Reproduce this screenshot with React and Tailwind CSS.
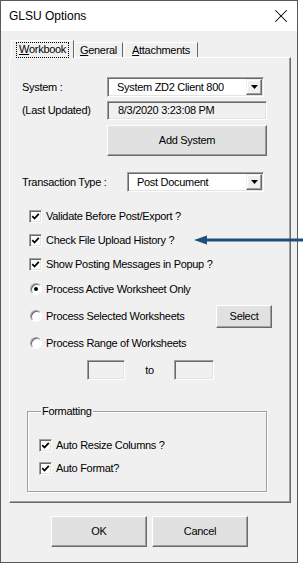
import { X } from 'lucide-react'

const raised = 'border border-t-white border-l-white border-r-[#696969] border-b-[#696969] shadow-[inset_-1px_-1px_0_#a0a0a0,inset_1px_1px_0_#e3e3e3] bg-[#e1e1e1]'
const sunken = 'border border-t-[#a0a0a0] border-l-[#a0a0a0] border-r-white border-b-white shadow-[inset_1px_1px_0_#696969,inset_-1px_-1px_0_#e3e3e3]'

function Combo({ value, width }) {
  return (
    <div className={`h-[20px] ${width} bg-white ${sunken} flex items-center justify-between pl-[9px] pr-[1px]`}>
      <span>{value}</span>
      <div className="w-[16px] h-[16px] bg-[#f0f0f0] border border-t-[#f0f0f0] border-l-[#f0f0f0] border-r-[#696969] border-b-[#696969] shadow-[inset_-1px_-1px_0_#a0a0a0,inset_1px_1px_0_#fff] flex items-center justify-center">
        <svg width="7" height="4" viewBox="0 0 7 4"><path d="M0 0h7L3.5 4z" fill="#000" /></svg>
      </div>
    </div>
  )
}

function Check({ label }) {
  return (
    <div className="flex items-center gap-[4px]">
      <div className={`w-[13px] h-[13px] bg-white ${sunken} flex items-center justify-center`}>
        <svg width="9" height="9" viewBox="0 0 9 9"><path d="M1.3 4.2l2.2 2.3L7.8 1.8" stroke="#000" strokeWidth="1.8" fill="none" /></svg>
      </div>
      <span>{label}</span>
    </div>
  )
}

function Radio({ label, on }) {
  return (
    <div className="flex items-center gap-[4px]">
      <div className="w-[12px] h-[12px] rounded-full bg-white border border-t-[#a0a0a0] border-l-[#a0a0a0] border-r-white border-b-white shadow-[inset_1px_1px_0_#696969] flex items-center justify-center">
        {on && <div className="w-[4px] h-[4px] rounded-full bg-black" />}
      </div>
      <span>{label}</span>
    </div>
  )
}

export default function App() {
  return (
    <div className="relative w-[303px] h-[564px] bg-white text-[11px] text-black leading-[13px] tracking-[-0.3px]" style={{ fontFamily: '"Liberation Sans", Arial, sans-serif' }}>
      <div className="w-[298px] h-[563px] border border-[#5a5a5a] bg-[#f0f0f0] flex flex-col">
        <div className="h-[30px] bg-white flex items-center justify-between pl-[8px] pr-[5px] text-[12px] tracking-normal">
          <span>GLSU Options</span>
          <X size={22} strokeWidth={1.1} color="#000" />
        </div>

        <div className="flex items-end h-[26px] pl-[10px]">
          <div className="relative z-10 h-[18px] -mb-[1px] w-[63px] bg-[#f0f0f0] border-t border-l border-white border-r border-r-[#696969] flex items-center justify-center">
            <span className="px-[3px] outline outline-1 outline-dotted outline-black -outline-offset-1 h-[16px] flex items-center"><u>W</u>orkbook</span>
          </div>
          <div className="h-[15px] w-[49px] border-t border-l border-white border-r border-r-[#696969] flex items-center justify-center pt-[1px]">
            <span><u>G</u>eneral</span>
          </div>
          <div className="h-[15px] w-[74px] ml-[1px] border-t border-l border-white border-r border-r-[#696969] flex items-center justify-center pt-[1px]">
            <span><u>A</u>ttachments</span>
          </div>
        </div>

        <div className="ml-[8px] w-[282px] h-[446px] border border-t-white border-l-white border-r-[#696969] border-b-[#696969] shadow-[inset_-1px_-1px_0_#a0a0a0] pl-[12px] pt-[19px] flex flex-col">
          <div className="flex items-center h-[20px]">
            <span className="w-[85px]">System :</span>
            <Combo value="System ZD2 Client 800" width="w-[157px]" />
          </div>
          <div className="flex items-center h-[19px] mt-[4px]">
            <span className="w-[85px]">(Last Updated)</span>
            <div className={`h-[19px] w-[160px] ${sunken} bg-[#f0f0f0] flex items-center pl-[10px]`}>8/3/2020 3:23:08 PM</div>
          </div>
          <div className="flex mt-[5px]">
            <div className={`ml-[85px] h-[31px] w-[160px] ${raised} flex items-center justify-center`}>Add System</div>
          </div>

          <div className="flex items-center h-[20px] mt-[16px]">
            <span className="w-[105px]">Transaction Type :</span>
            <Combo value="Post Document" width="w-[137px]" />
          </div>

          <div className="flex flex-col mt-[12px] pl-[7px]">
            <div className="h-[24px] flex items-center"><Check label="Validate Before Post/Export ?" /></div>
            <div className="h-[24px] flex items-center"><Check label="Check File Upload History ?" /></div>
            <div className="h-[24px] flex items-center"><Check label="Show Posting Messages in Popup ?" /></div>
          </div>

          <div className="flex flex-col pl-[8px]">
            <div className="h-[26px] flex items-center"><Radio label="Process Active Worksheet Only" on /></div>
            <div className="h-[28px] w-[242px] flex items-center justify-between">
              <Radio label="Process Selected Worksheets" />
              <div className={`h-[23px] w-[56px] ${raised} flex items-center justify-center`}>Select</div>
            </div>
            <div className="h-[26px] flex items-center"><Radio label="Process Range of Worksheets" /></div>
          </div>

          <div className="flex items-center h-[20px] mt-[4px] ml-[65px]">
            <div className={`h-[20px] w-[38px] ${sunken} bg-[#f0f0f0]`} />
            <span className="w-[49px] text-center">to</span>
            <div className={`h-[20px] w-[40px] ${sunken} bg-[#f0f0f0]`} />
          </div>

          <div className="relative mt-[31px] ml-[5px] w-[240px] h-[81px] border border-[#a0a0a0] shadow-[inset_1px_1px_0_#fff,1px_1px_0_#fff] pt-[22px] pl-[11px]">
            <span className="absolute -top-[7px] left-[13px] px-[1px] bg-[#f0f0f0]">Formatting</span>
            <div className="h-[23px] flex items-center"><Check label="Auto Resize Columns ?" /></div>
            <div className="h-[23px] flex items-center"><Check label="Auto Format?" /></div>
          </div>
        </div>

        <div className="flex mt-[13px] ml-[50px] gap-[5px]">
          <div className={`h-[31px] w-[96px] ${raised} flex items-center justify-center`}>OK</div>
          <div className={`h-[31px] w-[96px] ${raised} flex items-center justify-center`}>Cancel</div>
        </div>
      </div>

      <svg className="absolute left-[194px] top-[235px]" width="109" height="10" viewBox="0 0 109 10">
        <path d="M12 5H109" stroke="#1f4e79" strokeWidth="3" />
        <path d="M0 5L13 0.5V9.5z" fill="#1f4e79" />
      </svg>
    </div>
  )
}
